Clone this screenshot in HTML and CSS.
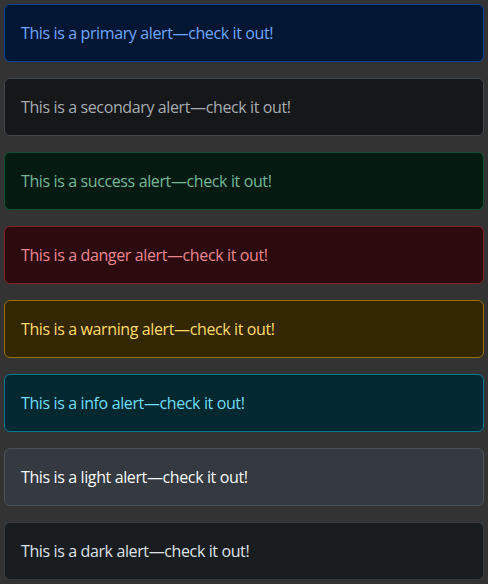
FILE: index.html
```html
<!DOCTYPE html>
<html lang="en">
<head>
<meta charset="utf-8">
<link rel="stylesheet" href="styles.css">
</head>
<body>
<div class="wrap">
  <div class="alert alert-primary">This is a primary alert—check it out!</div>
  <div class="alert alert-secondary">This is a secondary alert—check it out!</div>
  <div class="alert alert-success">This is a success alert—check it out!</div>
  <div class="alert alert-danger">This is a danger alert—check it out!</div>
  <div class="alert alert-warning">This is a warning alert—check it out!</div>
  <div class="alert alert-info">This is a info alert—check it out!</div>
  <div class="alert alert-light">This is a light alert—check it out!</div>
  <div class="alert alert-dark">This is a dark alert—check it out!</div>
</div>
</body>
</html>
```
FILE: styles.css
```css
html, body {
  margin: 0;
  background: #333333;
}
body {
  font-family: "Open Sans", "Noto Sans", sans-serif;
  font-size: 16px;
  line-height: 24px;
  letter-spacing: -0.38px;
}
.wrap {
  padding: 4px;
  display: flex;
  flex-direction: column;
  gap: 16px;
}
.alert {
  padding: 16px;
  border: 1px solid;
  border-radius: 6px;
}
.alert-primary { background: #031633; border-color: #084298; color: #6ea8fe; }
.alert-secondary { background: #161719; border-color: #41464b; color: #a7acb1; }
.alert-success { background: #051b11; border-color: #0f5132; color: #75b798; }
.alert-danger { background: #2c0b0e; border-color: #842029; color: #ea868f; }
.alert-warning { background: #332701; border-color: #997404; color: #ffda6a; }
.alert-info { background: #032830; border-color: #087990; color: #6edff6; }
.alert-light { background: #343a40; border-color: #495057; color: #f8f9fa; }
.alert-dark { background: #1a1d20; border-color: #343a40; color: #dee2e6; }
```
